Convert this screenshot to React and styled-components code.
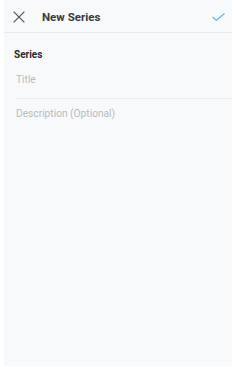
import React from "react";
import styled, { createGlobalStyle } from "styled-components";

const Global = createGlobalStyle`
  html, body { margin: 0; padding: 0; background: #ffffff; }
  body { font-family: Roboto, "Noto Sans", Arial, sans-serif; }
`;

const Screen = styled.div`
  margin-left: 4px;
  width: 228px;
  height: 366px;
  background: #f8f9fb;
  display: flex;
  flex-direction: column;
`;

const Header = styled.header`
  height: 30px;
  padding: 2px 7px 0 9px;
  display: flex;
  align-items: center;
  border-bottom: 1px solid #e7e9ec;
`;

const IconButton = styled.button`
  padding: 0;
  border: 0;
  background: none;
  display: flex;
  align-items: center;
  justify-content: center;
  color: ${(p) => p.$color};
`;

const HeaderTitle = styled.h1`
  margin: 0 0 0 17px;
  flex: 1;
  font-size: 11.5px;
  line-height: 14px;
  font-weight: 700;
  color: #3a3a3a;
`;

const Section = styled.section`
  display: flex;
  flex-direction: column;
  padding: 16px 0 0 10px;
`;

const SectionLabel = styled.h2`
  margin: 0;
  font-size: 10px;
  font-weight: 700;
  color: #2b2b2b;
  line-height: 12px;
`;

const Field = styled.div`
  margin-left: 2px;
  padding: ${(p) => p.$padTop}px 0 12px 0;
  font-size: 10.2px;
  line-height: 12px;
  color: #b9bbbe;
  border-bottom: ${(p) => (p.$divider ? "1px solid #eceef0" : "none")};
`;

export default function App() {
  return (
    <>
      <Global />
      <Screen>
        <Header>
          <IconButton $color="#555">
            <svg width="12" height="12" viewBox="0 0 12 12">
              <path d="M0.6 0.6 L11.4 11.4 M11.4 0.6 L0.6 11.4" stroke="currentColor" strokeWidth="1.2" fill="none" />
            </svg>
          </IconButton>
          <HeaderTitle>New Series</HeaderTitle>
          <IconButton $color="#6db9ee">
            <svg width="13" height="8" viewBox="0 0 13 8">
              <path d="M0.5 4 L4.3 7.3 L12.5 0.5" stroke="currentColor" strokeWidth="1.3" fill="none" />
            </svg>
          </IconButton>
        </Header>
        <Section>
          <SectionLabel>Series</SectionLabel>
          <Field $divider $padTop={13}>Title</Field>
          <Field $padTop={9}>Description (Optional)</Field>
        </Section>
      </Screen>
    </>
  );
}
